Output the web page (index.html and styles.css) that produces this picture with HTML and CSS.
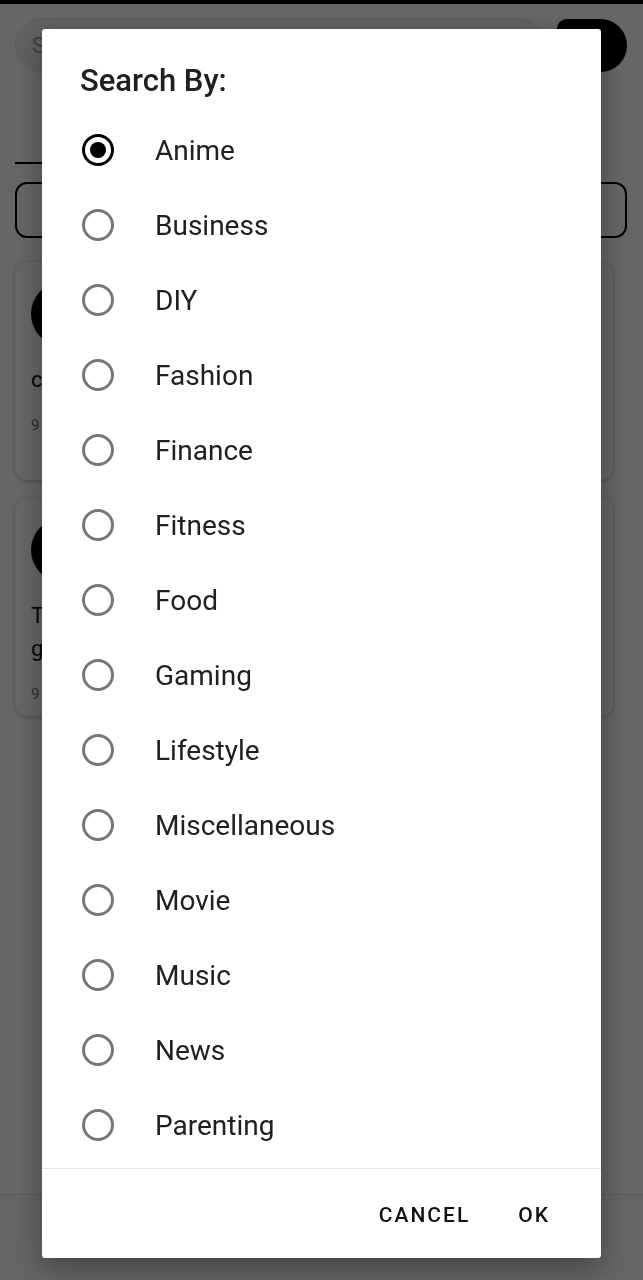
FILE: index.html
```html
<!DOCTYPE html>
<html>
<head>
<meta charset="utf-8">
<link rel="stylesheet" href="styles.css">
</head>
<body>
<div class="app">
  <div class="statusbar"></div>
  <div class="topbar">
    <div class="search"><span class="search-ph">Search</span></div>
    <div class="go"></div>
  </div>
  <div class="tabs"><div class="tab-line"></div></div>
  <div class="filter"></div>
  <div class="cards">
    <div class="card">
      <div class="avatar"></div>
      <div class="card-title">chat</div>
      <div class="card-meta">9 users</div>
    </div>
    <div class="card">
      <div class="avatar"></div>
      <div class="card-title">Test<br>group</div>
      <div class="card-meta">9 users</div>
    </div>
  </div>
  <div class="spacer"></div>
  <div class="bottomnav"></div>
</div>

<div class="scrim"></div>

<div class="dialog">
  <h2 class="dialog-title">Search By:</h2>
  <ul class="options">
    <li class="option selected"><span class="radio"></span><span class="label">Anime</span></li>
    <li class="option"><span class="radio"></span><span class="label">Business</span></li>
    <li class="option"><span class="radio"></span><span class="label">DIY</span></li>
    <li class="option"><span class="radio"></span><span class="label">Fashion</span></li>
    <li class="option"><span class="radio"></span><span class="label">Finance</span></li>
    <li class="option"><span class="radio"></span><span class="label">Fitness</span></li>
    <li class="option"><span class="radio"></span><span class="label">Food</span></li>
    <li class="option"><span class="radio"></span><span class="label">Gaming</span></li>
    <li class="option"><span class="radio"></span><span class="label">Lifestyle</span></li>
    <li class="option"><span class="radio"></span><span class="label">Miscellaneous</span></li>
    <li class="option"><span class="radio"></span><span class="label">Movie</span></li>
    <li class="option"><span class="radio"></span><span class="label">Music</span></li>
    <li class="option"><span class="radio"></span><span class="label">News</span></li>
    <li class="option"><span class="radio"></span><span class="label">Parenting</span></li>
  </ul>
  <div class="actions">
    <button class="btn">CANCEL</button>
    <button class="btn">OK</button>
  </div>
</div>
</body>
</html>
```

FILE: styles.css
```css
* { box-sizing: border-box; }

html, body {
  margin: 0;
  padding: 0;
  width: 643px;
  height: 1280px;
  overflow: hidden;
  font-family: Roboto, "Liberation Sans", sans-serif;
  background: #ffffff;
}

.app {
  width: 643px;
  height: 1280px;
  display: flex;
  flex-direction: column;
  background: #ffffff;
}

.statusbar {
  height: 4px;
  background: #000;
  flex: none;
}

.topbar {
  display: flex;
  align-items: center;
  justify-content: space-between;
  padding: 14px 16px 0 15px;
  height: 69px;
  flex: none;
}

.search {
  width: 530px;
  height: 55px;
  border-radius: 28px;
  background: #f3f3f3;
  border: 1px solid #e6e6e6;
  display: flex;
  align-items: center;
  padding-left: 16px;
}

.search-ph {
  color: #9a9a9a;
  font-size: 22px;
}

.go {
  width: 70px;
  height: 53px;
  background: #000;
  border-radius: 10px 27px 27px 10px;
}

.tabs {
  height: 91px;
  display: flex;
  align-items: flex-end;
  padding: 0 0 0 15px;
  flex: none;
}

.tab-line {
  width: 60px;
  height: 2px;
  background: #000;
}

.filter {
  margin: 18px 16px 0 15px;
  height: 56px;
  border: 2px solid #000;
  border-radius: 12px;
  flex: none;
}

.cards {
  display: flex;
  flex-direction: column;
  gap: 18px;
  padding: 24px 30px 0 15px;
  flex: none;
}

.card {
  height: 218px;
  border-radius: 12px;
  background: #ffffff;
  box-shadow: 0 1px 4px rgba(0, 0, 0, 0.25);
  padding: 20px 16px 0 16px;
  display: flex;
  flex-direction: column;
}

.avatar {
  width: 64px;
  height: 64px;
  border-radius: 50%;
  background: #000;
}

.card-title {
  margin-top: 17px;
  font-size: 22px;
  line-height: 33px;
  color: #111;
}

.card-meta {
  margin-top: 20px;
  font-size: 15px;
  color: #777;
}

.spacer { flex: 1; }

.bottomnav {
  height: 86px;
  border-top: 1px solid #e2e2e2;
  background: #fbfbfb;
  flex: none;
}

.scrim {
  position: fixed;
  inset: 0;
  background: rgba(0, 0, 0, 0.6);
}

.dialog {
  position: fixed;
  left: 42px;
  top: 29px;
  width: 559px;
  height: 1229px;
  background: #fff;
  border-radius: 3px;
  box-shadow: 0 10px 30px rgba(0, 0, 0, 0.35);
  display: flex;
  flex-direction: column;
}

.dialog-title {
  margin: 0;
  padding: 34px 0 0 38px;
  height: 83px;
  font-size: 31px;
  line-height: 36px;
  font-weight: 500;
  color: #202020;
}

.options {
  list-style: none;
  margin: 0;
  padding: 0;
  flex: 1;
  border-bottom: 1.5px solid #e3e3e3;
}

.option {
  height: 75px;
  display: flex;
  align-items: center;
  padding-left: 40px;
}

.radio {
  width: 32px;
  height: 32px;
  border-radius: 50%;
  border: 3px solid #777;
  flex: none;
  display: flex;
  align-items: center;
  justify-content: center;
}

.option.selected .radio {
  border-color: #000;
}

.option.selected .radio::after {
  content: "";
  width: 16px;
  height: 16px;
  border-radius: 50%;
  background: #000;
}

.label {
  margin-left: 41px;
  padding-top: 2px;
  font-size: 28px;
  color: #202020;
}

.actions {
  height: 89px;
  display: flex;
  justify-content: flex-end;
  align-items: center;
  padding: 2px 39px 0 0;
  flex: none;
}

.btn {
  background: none;
  border: none;
  font-family: Roboto, "Liberation Sans", sans-serif;
  font-size: 21px;
  font-weight: 500;
  letter-spacing: 2px;
  color: #111;
  padding: 10px 12px;
}

.btn + .btn {
  margin-left: 24px;
}
```
